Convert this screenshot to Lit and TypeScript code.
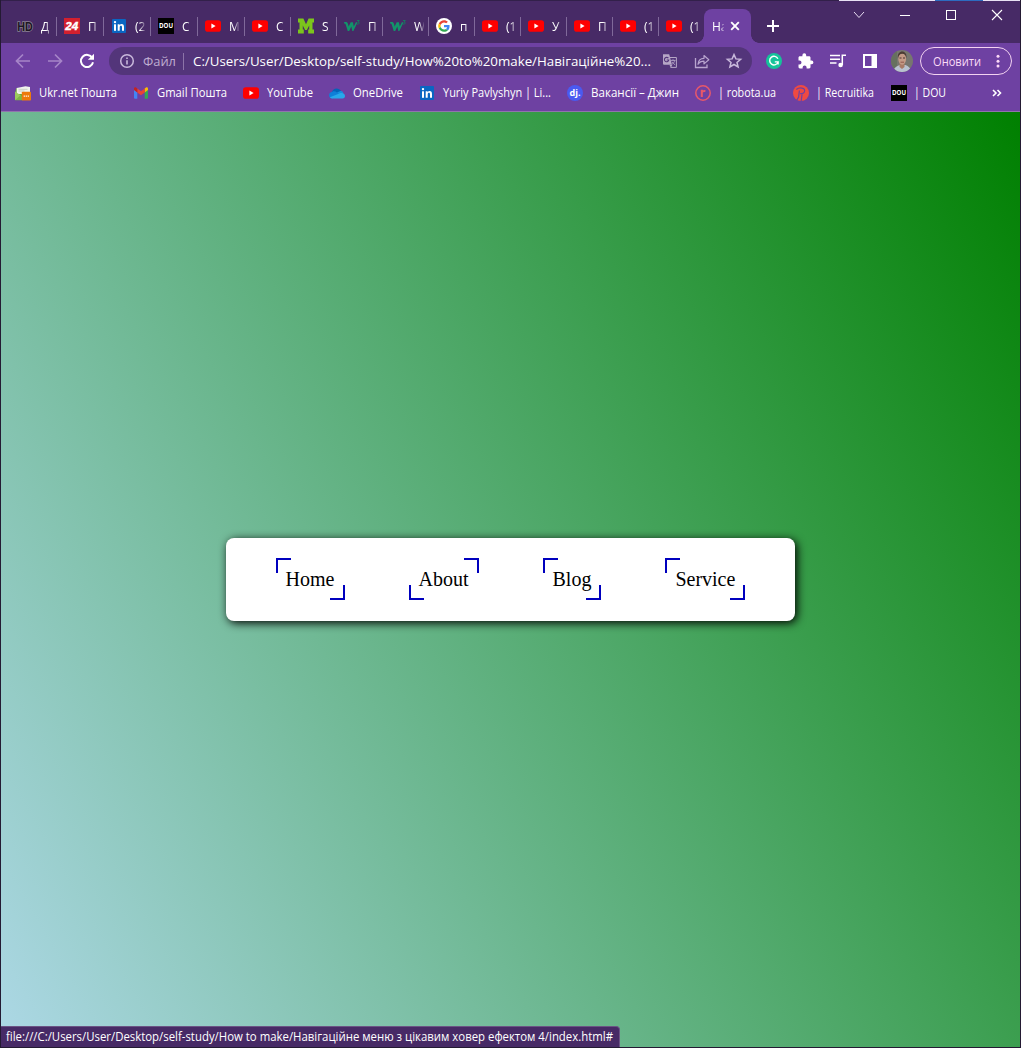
import { LitElement, html, svg, css, nothing } from "lit";
import { customElement, property } from "lit/decorators.js";

const ICONS: Record<string, unknown> = {
  hd: svg`<text x="8" y="12.500" text-anchor="middle" textLength="15.500" lengthAdjust="spacingAndGlyphs" font-family="Liberation Sans" font-size="12.500" font-weight="700" fill="#1d1624" stroke="#8d8292" stroke-width="1.500" paint-order="stroke">HD</text>`,
  n24: svg`<rect width="16" height="16" fill="#d3202e"/><text x="7.700" y="12" text-anchor="middle" textLength="13" lengthAdjust="spacingAndGlyphs" font-family="Liberation Sans" font-size="11" font-weight="700" font-style="italic" fill="#fff" stroke="#fff" stroke-width=".4">24</text>`,
  linkedin: svg`<rect x="1" y="1" width="14" height="14" rx="1" fill="#0a66c2"/><rect x="3" y="6.300" width="2" height="6.500" fill="#fff"/><circle cx="4" cy="4.100" r="1.200" fill="#fff"/><path d="M6.700 6.300h1.900v.9c.4-.7 1.100-1.100 2-1.100 1.800 0 2.400 1.100 2.400 2.900v3.800h-2V9.400c0-1-.2-1.600-1.100-1.600-.8 0-1.200.6-1.200 1.600v3.400h-2z" fill="#fff"/>`,
  dou: svg`<rect width="16" height="16" fill="#000"/><text x="8" y="10.400" text-anchor="middle" textLength="14" lengthAdjust="spacingAndGlyphs" font-family="Open Sans" font-size="6.600" font-weight="700" fill="#fff">DOU</text>`,
  youtube: svg`<rect y="2.300" width="16" height="11.400" rx="2.800" fill="#f00"/><path d="M6.400 5.500v5l4.200-2.500z" fill="#fff"/>`,
  m: svg`<path d="M0 .5h5.400L8 6.200 10.600 .5H16v4h-1.500v7H16v4h-5.800v-4h1V7.400L8.900 12H7.100L4.800 7.400v4.100h1v4H0v-4h1.500v-7H0z" fill="#7cc51c"/>`,
  w3: svg`<path d="M0 4.300c2.300-.9 3.400-.3 3.900 1.500l.8 2.700 2-4.200h2.200l.9 4.100 2.100-4.100h1.600l-4.100 8.800H8.300L7.300 8.600l-2.100 4.500H3.700L1.800 6.800C1.500 5.700 1 5.300 0 5.400z" fill="#12946a"/><path d="M13 2.500h2.300l-1.200 1.600c1.800 0 1.400 2.400-1.100 2" fill="none" stroke="#12805f" stroke-width=".9"/>`,
  google: svg`<circle cx="8" cy="8" r="8" fill="#fff"/><g transform="translate(2.200 2.200) scale(.242)"><path fill="#ea4335" d="M24 9.500c3.540 0 6.710 1.220 9.210 3.600l6.850-6.850C35.900 2.380 30.470 0 24 0 14.620 0 6.510 5.380 2.560 13.220l7.980 6.190C12.430 13.720 17.740 9.500 24 9.500z"/><path fill="#4285f4" d="M46.980 24.550c0-1.570-.15-3.090-.38-4.550H24v9.020h12.940c-.58 2.960-2.260 5.480-4.780 7.180l7.730 6c4.510-4.180 7.090-10.360 7.090-17.650z"/><path fill="#fbbc05" d="M10.530 28.590c-.48-1.450-.76-2.990-.76-4.590s.27-3.140.76-4.590l-7.980-6.190C.92 16.460 0 20.120 0 24s.92 7.540 2.560 10.780z"/><path fill="#34a853" d="M24 48c6.480 0 11.930-2.130 15.890-5.810l-7.730-6c-2.150 1.450-4.920 2.300-8.160 2.300-6.260 0-11.570-4.220-13.470-9.910l-7.980 6.190C6.510 42.620 14.620 48 24 48z"/></g>`,
  ukrnet: svg`<path d="M0 8 1.500 3 7 5v10H0z" fill="#6aa83a"/><path d="M1.700 3 10.500 1.300l4.500.7V9H1.700z" fill="#f1f4ee"/><path d="M3.500 4.300h9M3.500 6h6" stroke="#b7c3b4" stroke-width=".7"/><path d="M0 6.500 6 10.500V15H0z" fill="#9ccb5e"/><path d="m0 15.300 5.500-5L8 12v3.300z" fill="#7db545"/><rect x="6.800" y="6.800" width="9.200" height="8.700" rx=".8" fill="#ee7a0c"/><path d="M8.700 11.200h1.200M10.700 11.200h1.200M12.700 11.200h1.200" stroke="#fff" stroke-width="1.200"/>`,
  gmail: svg`<path d="M1 13.700V4.500l3.300 2.500v6.700H2A1 1 0 0 1 1 13z" fill="#4285f4"/><path d="M11.700 7 15 4.500V13a1 1 0 0 1-1 .7h-2.300z" fill="#34a853"/><path d="M11.700 3.500 13 2.600c1-.6 2 0 2 1.200v1.300L11.700 7.500z" fill="#fbbc04"/><path d="m4.300 7.500V3.500L8 6.300l3.700-2.800v4L8 10.300z" fill="#ea4335"/><path d="M1 5.100V3.800c0-1.200 1-1.800 2-1.200l1.300.9v4z" fill="#c5221f"/>`,
  onedrive: svg`<path d="M2.800 7.500C4 3.300 9 1.700 12.300 6.200L8 11z" fill="#0364b8"/><path d="M3.300 6.700C5 5.900 6.500 6.500 8 7.600l4 2.500-9 3.300C-.8 13.200-1.100 7.400 3.300 6.700z" fill="#0f7fd8"/><path d="M8 7.600 10.800 6.300c2.200-.7 3.400.4 3.500 2.200L11 10z" fill="#1490df"/><path d="M.9 12.300 11 8.300c2.500-.8 5 .7 5 2.700 0 1.400-1 2.400-2.300 2.400H3C2 13.400 1.500 13 .9 12.300z" fill="#28a8ea"/>`,
  djinni: svg`<circle cx="8" cy="8" r="8" fill="#4a5af0"/><text x="8" y="11" text-anchor="middle" textLength="11" lengthAdjust="spacingAndGlyphs" font-family="Open Sans" font-size="9" font-weight="700" fill="#fff">dj.</text>`,
  robota: svg`<circle cx="8" cy="8" r="7.200" fill="none" stroke="#e8586a" stroke-width="1.500"/><path d="M6.800 12V4.700M6.800 8c0-1.500 1.100-2.200 3.600-2" fill="none" stroke="#e8586a" stroke-width="2.100"/>`,
  recruitika: svg`<circle cx="8" cy="8" r="8" fill="#ef4a42"/><path d="M3.300 4.500C5.500 2.800 8.200 2.600 10.500 3.600c1.600.8 1.500 3.200 0 4.300-1 .7-2.100.9-3.300.8M6.400 5.500 5.600 12l-1.800 3.200M9 9.500l-.8 6.500" fill="none" stroke="#6e41a2" stroke-width="1.200"/>`,
  back: svg`<path d="M15 8H1.800M8 1.500 1.500 8 8 14.500" fill="none" stroke="#a685c8" stroke-width="1.700"/>`,
  forward: svg`<path d="M1 8h13.200M8 1.500 14.500 8 8 14.500" fill="none" stroke="#a685c8" stroke-width="1.700"/>`,
  reload: svg`<path d="M13.300 4.900A6.100 6.100 0 1 0 14 9.200" fill="none" stroke="#fff" stroke-width="2"/><path d="M15 .7v6.100H8.900z" fill="#fff"/>`,
  info: svg`<circle cx="8" cy="8" r="6.300" fill="none" stroke="#c8b8db" stroke-width="1.500"/><path d="M8 7.200v4.200M8 4.400v1.700" stroke="#c8b8db" stroke-width="1.600"/>`,
  translate: svg`<path d="M7 4.500h7.400v9.900H8.500" fill="none" stroke="#b6a6c6"/><path d="M1 1.300h6.200L10 11.800H2a1 1 0 0 1-1-1z" fill="#b6a6c6"/><path d="m7.500 12 1.500 2.700L10.200 12z" fill="#b6a6c6"/><path d="M6.400 5.200A2.200 2.200 0 1 0 6.800 7H4.700" fill="none" stroke="#54357a" stroke-width="1.100"/><path d="M9 7.400h4.500M11 6.300v1M12.700 7.400c-.3 1.600-1.200 2.800-2.400 3.700M10.200 8.800c.5 1 1.500 2.200 2.900 3" fill="none" stroke="#b6a6c6" stroke-width=".9"/>`,
  share: svg`<path d="M1.500 5v9.500h11.500V11.500" fill="none" stroke="#b9a5cf" stroke-width="1.300"/><path d="M4 11.300c.3-4 2.500-6 6-6V2.500l4.800 4.200-4.800 4.200V8.100c-2.800 0-4.600.8-6 3.200z" fill="none" stroke="#b9a5cf" stroke-width="1.200" stroke-linejoin="round"/>`,
  star: svg`<path d="m8 1.600 1.900 4.300 4.700.4-3.600 3.100 1.100 4.600L8 11.500 3.900 14 5 9.400 1.400 6.300l4.700-.4z" fill="none" stroke="#c8b8db" stroke-width="1.500"/>`,
  grammarly: svg`<circle cx="8" cy="8" r="8" fill="#15c39a"/><path d="M11.900 5.800A4.300 4.300 0 1 0 12.100 8.900H8.800M12.100 8.500v3" fill="none" stroke="#fff" stroke-width="1.400"/>`,
  puzzle: svg`<path d="M13.600 7.600h-1.100V4.700c0-.8-.6-1.400-1.400-1.400H8.200V2.200a1.900 1.900 0 0 0-3.800 0v1.100H1.900C1.100 3.300.5 3.900.5 4.700v2.700h1a2 2 0 0 1 0 4h-1v2.700c0 .8.600 1.400 1.400 1.400h2.700v-1a2 2 0 0 1 4 0v1h2.500c.8 0 1.400-.6 1.400-1.400v-2.900h1.100a1.800 1.800 0 0 0 0-3.600z" fill="#fff"/>`,
  music: svg`<path d="M0 2.500h10M0 6.200h10M0 9.900h6.500" stroke="#fff" stroke-width="1.500"/><path d="M12.300 12V2.300H16" fill="none" stroke="#fff" stroke-width="1.500"/><circle cx="10.600" cy="12" r="2.300" fill="#fff"/>`,
  panel: svg`<path d="M1 1h14v14H1z" fill="#fff"/><rect x="3" y="3" width="6.500" height="10" fill="#6b3fa0"/>`,
  chevron: svg`<path d="M3 5 8 10.500 13 5" fill="none" stroke="#e8def2"/>`,
  minimize: svg`<path d="M3 8.500h10" stroke="#fff"/>`,
  maximize: svg`<rect x="3.500" y="3.500" width="9" height="9" fill="none" stroke="#fff"/>`,
  close: svg`<path d="m3 3 10 10M13 3 3 13" fill="none" stroke="#fff" stroke-width="1.100"/>`,
  tabclose: svg`<path d="m4.200 4.200 7.600 7.600M11.800 4.200l-7.600 7.600" fill="none" stroke="#fff" stroke-width="1.900"/>`,
  plus: svg`<path d="M8 2v12M2 8h12" stroke="#fff" stroke-width="2"/>`,
  dots: svg`<circle cx="8" cy="3.300" r="1.500" fill="#fbd9f6"/><circle cx="8" cy="8.200" r="1.500" fill="#fbd9f6"/><circle cx="8" cy="13.100" r="1.500" fill="#fbd9f6"/>`,
  more: svg`<path d="m4 5 3 3-3 3M8.500 5l3 3-3 3" fill="none" stroke="#fff" stroke-width="1.600"/>`,
};

const glyph = (name: string) =>
  html`<svg class="icon" viewBox="0 0 16 16" width="16" height="16">${ICONS[name]}</svg>`;

/* One line of interface text fitted to a known advance width. */
const line = (text: string, width: number, size: number, height: number, baseline: number, fill = "#fff") =>
  html`<svg class="line" width=${width} height=${height}><text x="0" y=${baseline} font-size=${size} fill=${fill} textLength=${width} lengthAdjust="spacingAndGlyphs">${text}</text></svg>`;

const shared = css`
  * { box-sizing: border-box; }
  svg { display: block; flex: none; overflow: visible; }
  .line { font-family: "Open Sans", "Noto Sans", sans-serif; }
`;

const TABS: [string, string][] = [
  ["hd", "Д"], ["n24", "П"], ["linkedin", "(2"], ["dou", "С"], ["youtube", "М"],
  ["youtube", "С"], ["m", "S"], ["w3", "П"], ["w3", "W"], ["google", "п"],
  ["youtube", "(1"], ["youtube", "У"], ["youtube", "П"], ["youtube", "(1"], ["youtube", "(1"],
];

@customElement("tab-strip")
class TabStrip extends LitElement {
  static styles = [shared, css`
    :host { display: flex; height: 43px; padding-left: 9px; background: #472a66; font: 500 12px "Open Sans", sans-serif; color: #fff; }
    .tab { display: flex; align-items: center; width: 46px; height: 34px; margin-top: 9px; padding-left: 7px; flex: none; }
    .tab:nth-child(-n + 5) { width: 47px; }
    .tab:nth-child(15) { width: 45px; }
    .title { width: 10px; margin-left: 8px; overflow: hidden; white-space: nowrap; -webkit-mask-image: linear-gradient(90deg, #000 50%, transparent 110%); }
    .sep { width: 1px; height: 19px; margin-left: auto; background: #80699a; }
    .active { position: relative; display: flex; align-items: center; width: 47px; height: 34px; margin-top: 9px; padding-left: 8px; border-radius: 8px 8px 0 0; background: #6e41a2; flex: none; }
    .active::before, .active::after { content: ""; position: absolute; bottom: 0; width: 8px; height: 8px; }
    .active::before { left: -8px; background: radial-gradient(circle at 0 0, transparent 7.500px, #6e41a2 8px); }
    .active::after { right: -8px; background: radial-gradient(circle at 100% 0, transparent 7.500px, #6e41a2 8px); }
    .active .title { margin: 0; width: 12px; -webkit-mask-image: linear-gradient(90deg, #000 65%, transparent 115%); }
    .active .icon { margin-left: 3px; }
    .plus { padding: 18px 0 0 14px; }
    .controls { display: flex; margin-left: auto; height: 30px; }
    .control { display: flex; width: 46px; align-items: center; justify-content: center; }
  `];
  render() {
    return html`
      ${TABS.map(([icon, title], i) => html`<div class="tab">${glyph(icon)}<span class="title">${title}</span>${i < TABS.length - 1 ? html`<i class="sep"></i>` : nothing}</div>`)}
      <div class="active"><span class="title">На</span>${glyph("tabclose")}</div>
      <div class="plus">${glyph("plus")}</div>
      <div class="controls">${["chevron", "minimize", "maximize", "close"].map((n) => html`<span class="control">${glyph(n)}</span>`)}</div>
    `;
  }
}

@customElement("address-bar")
class AddressBar extends LitElement {
  static styles = [shared, css`
    :host { display: flex; align-items: center; height: 36px; padding-left: 6px; }
    .cell { display: flex; width: 32px; justify-content: center; flex: none; }
    .box { display: flex; align-items: center; width: 643px; height: 28px; margin: 0 6px; padding-left: 10px; border-radius: 14px; background: #53357a; flex: none; }
    .scheme { margin-left: 8px; }
    .rule { width: 1px; height: 17px; margin: 0 9px 0 7px; background: #8c74a8; }
    .url { margin-right: 3px; }
    .update { display: flex; align-items: center; width: 92px; height: 28px; margin-left: 2px; padding-left: 12px; border: 1px solid #f3d3f1; border-radius: 14px; flex: none; }
    .update .icon { margin-left: 8.500px; }
  `];
  render() {
    return html`
      ${["back", "forward", "reload"].map((n) => html`<span class="cell">${glyph(n)}</span>`)}
      <div class="box">
        ${glyph("info")}
        <span class="scheme">${line("Файл", 33, 13, 20, 15, "#bfadd1")}</span>
        <i class="rule"></i>
        <span class="url">${line("C:/Users/User/Desktop/self-study/How%20to%20make/Навігаційне%20...", 458, 13.5, 20, 15)}</span>
        ${["translate", "share", "star"].map((n) => html`<span class="cell">${glyph(n)}</span>`)}
      </div>
      ${["grammarly", "puzzle", "music", "panel"].map((n) => html`<span class="cell">${glyph(n)}</span>`)}
      <span class="cell"><svg width="22" height="22" viewBox="0 0 22 22">
        <defs><clipPath id="round"><circle cx="11" cy="11" r="11"/></clipPath></defs>
        <g clip-path="url(#round)">
          <rect width="22" height="22" fill="#77766f"/><rect width="6" height="22" fill="#66705f"/>
          <path d="M2 22c1-5 4-5.500 6.500-7h6c3 1.500 5 2.500 6 7z" fill="#b9c2d0"/>
          <path d="M8.500 13h5v4l-2.500 2-2.500-2z" fill="#a87a66"/>
          <ellipse cx="11.200" cy="9" rx="3.900" ry="5.800" fill="#c49a86"/>
          <path d="M6.900 8.500c-.6-5 1.800-7 4.300-7s4.800 2 4.300 7c-.6-3.300-1.500-4.800-4.200-4.800S7.600 5.200 6.900 8.500z" fill="#4b3b34"/>
          <path d="M8.500 8h2M12 8h2" stroke="#4b3330" stroke-width="1.100"/><path d="M9.500 12.200h3.500" stroke="#8b5145" stroke-width=".9"/>
        </g></svg></span>
      <div class="update">${line("Оновити", 48, 12.5, 20, 14.5, "#fbdcf7")}${glyph("dots")}</div>
    `;
  }
}

const BOOKMARKS: [string, string, number][] = [
  ["ukrnet", "Ukr.net Пошта", 78], ["gmail", "Gmail Пошта", 70], ["youtube", "YouTube", 46],
  ["onedrive", "OneDrive", 50], ["linkedin", "Yuriy Pavlyshyn | Li...", 108], ["djinni", "Вакансії – Джин", 88],
  ["robota", "| robota.ua", 58], ["recruitika", "| Recruitika", 58], ["dou", "| DOU", 32],
];

@customElement("bookmark-bar")
class BookmarkBar extends LitElement {
  static styles = [shared, css`
    :host { display: flex; align-items: center; gap: 16px; height: 28px; padding: 0 15px 0 14px; }
    .item { display: flex; align-items: center; gap: 8px; }
    .item:nth-child(n + 7) { gap: 7px; margin-right: 1px; }
    .more { margin-left: auto; }
  `];
  render() {
    return html`${BOOKMARKS.map(([icon, label, w]) => html`<span class="item">${glyph(icon)}${line(label, w, 12.3, 18, 13.2)}</span>`)}<span class="more">${glyph("more")}</span>`;
  }
}

@customElement("nav-link")
class NavLink extends LitElement {
  @property() label = "";
  @property({ type: Boolean, reflect: true }) flipped = false;
  static styles = css`
    :host { display: block; position: relative; height: 42px; padding: 10px; font: 20px/22px "Liberation Serif", serif; color: #000; }
    :host::before, :host::after { content: ""; position: absolute; width: 15px; height: 15px; box-sizing: border-box; border: 0 solid #0000be; }
    :host::before { top: 0; left: 0; border-width: 2px 0 0 2px; }
    :host::after { bottom: 0; right: 0; border-width: 0 2px 2px 0; }
    :host([flipped])::before { left: auto; right: 0; border-width: 2px 2px 0 0; }
    :host([flipped])::after { right: auto; left: 0; border-width: 0 0 2px 2px; }
  `;
  render() { return html`${this.label}`; }
}

@customElement("app-root")
class AppRoot extends LitElement {
  static styles = [shared, css`
    :host { display: flex; flex-direction: column; position: relative; width: 1021px; height: 1048px; overflow: hidden; border: solid #241a33; border-width: 0 1px 1px; box-sizing: border-box; background: #6e41a2; }
    .edge { position: absolute; top: 0; left: 0; width: 100%; height: 1px; background: linear-gradient(90deg, #32204a 838px, #e9e2f4 838px 934px, #2d6cc0 934px 982px, #e9e2f4 982px); }
    .chrome { height: 112px; padding-bottom: 1px; border-bottom: 1px solid #8f74ad; flex: none; }
    .page { display: flex; flex: 1; justify-content: center; align-items: center; background: linear-gradient(60deg, lightblue, green); }
    .menu { display: flex; gap: 64px; height: 83px; padding: 20px 50px; border-radius: 8px; background: #fff; box-shadow: 2px 2px 10px #000; }
    .status { position: absolute; left: 0; bottom: 0; display: flex; width: 619px; height: 21px; padding-left: 5px; border-top: 1px solid #6b5485; border-right: 1px solid #6b5485; border-radius: 0 4px 0 0; background: #472a66; }
  `];
  render() {
    return html`
      <div class="chrome"><tab-strip></tab-strip><address-bar></address-bar><bookmark-bar></bookmark-bar></div>
      <div class="edge"></div>
      <main class="page">
        <nav class="menu">
          <nav-link label="Home"></nav-link><nav-link label="About" flipped></nav-link>
          <nav-link label="Blog"></nav-link><nav-link label="Service"></nav-link>
        </nav>
      </main>
      <div class="status">${line("file:///C:/Users/User/Desktop/self-study/How to make/Навігаційне меню з цікавим ховер ефектом 4/index.html#", 607, 12, 20, 14)}</div>
    `;
  }
}
